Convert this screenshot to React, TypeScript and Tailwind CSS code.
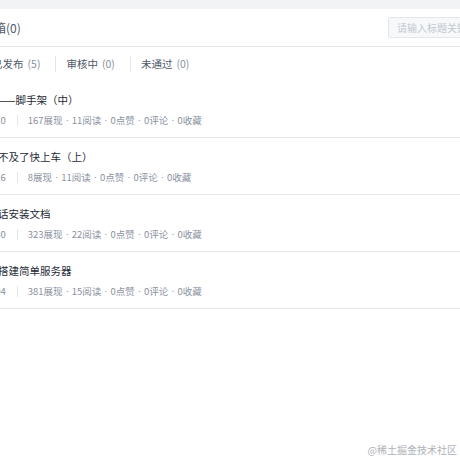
const font = { fontFamily: '"Noto Sans CJK SC", "Noto Sans", sans-serif' };

type Article = {
  title: string;
  date: string;
  views: number;
  reads: number;
};

const articles: Article[] = [
  { title: "工程实践——脚手架（中）", date: "2023-02-10", views: 167, reads: 11 },
  { title: "再学就来不及了快上车（上）", date: "2023-01-16", views: 8, reads: 11 },
  { title: "一份大白话安装文档", date: "2022-12-30", views: 323, reads: 22 },
  { title: "从零开始搭建简单服务器", date: "2022-12-04", views: 381, reads: 15 },
];

function Dot() {
  return <span className="mx-[3px] font-['Liberation_Sans']">·</span>;
}

function Tab({ label, count, last }: { label: string; count: number; last?: boolean }) {
  return (
    <div className="flex items-center">
      <span className="text-[#515767]">{label}</span>
      <span className="ml-[4px] text-[#8a919f]">({count})</span>
      {!last && <span className="ml-[15px] mr-[10px] h-[16px] w-px bg-[#e4e6eb]" />}
    </div>
  );
}

function Row({ a }: { a: Article }) {
  return (
    <div className="border-b border-[#e4e6eb] pt-[11px] pb-[10px]">
      <div className="-ml-[1px] whitespace-nowrap text-[10.5px] leading-[16px] text-[#252933]">{a.title}</div>
      <div className="mt-[5px] flex items-center whitespace-nowrap text-[9.5px] leading-[14px] text-[#8a919f]">
        <span>{a.date}</span>
        <span className="ml-[11px] mr-[10px] h-[11px] w-px bg-[#e4e6eb]" />
        <span>{a.views}展现</span>
        <Dot />
        <span>{a.reads}阅读</span>
        <Dot />
        <span>0点赞</span>
        <Dot />
        <span>0评论</span>
        <Dot />
        <span>0收藏</span>
      </div>
    </div>
  );
}

export default function App() {
  return (
    <div className="relative h-[460px] w-[460px] overflow-hidden bg-white" style={font}>
      <div className="h-[9px] bg-[#f2f3f5]" />
      <div className="flex h-[38px] items-center justify-between border-b border-[#e4e6eb]">
        <span className="-ml-[30px] whitespace-nowrap text-[12px] text-[#515767]">草稿箱(0)</span>
        <div className="flex h-[21px] w-[120px] shrink-0 -mr-[48px] items-center rounded-[2px] border border-[#e4e6eb] bg-[#f7f8fa] pl-[8px]">
          <span className="whitespace-nowrap text-[10px] text-[#c2c8d1]">请输入标题关键词</span>
        </div>
      </div>
      <div className="-ml-[8px] flex h-[34px] items-center whitespace-nowrap text-[10.5px]">
        <Tab label="已发布" count={5} />
        <Tab label="审核中" count={0} />
        <Tab label="未通过" count={0} last />
      </div>
      <div className="-ml-[43px] w-[540px]">
        {articles.map((a) => (
          <Row key={a.title} a={a} />
        ))}
      </div>
      <div className="absolute bottom-[3px] right-[3px] text-[10px] text-[#aeb2b8]">@稀土掘金技术社区</div>
    </div>
  );
}
